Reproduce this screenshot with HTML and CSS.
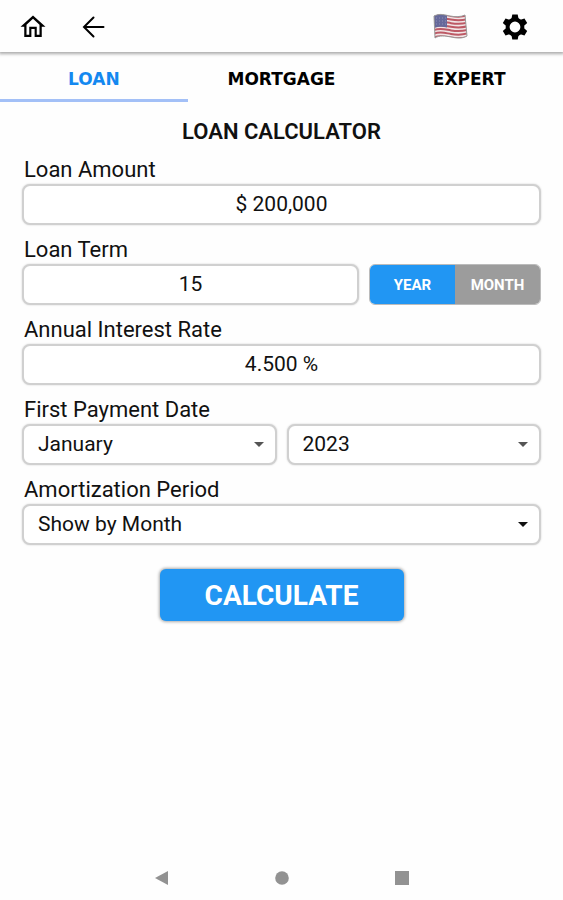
FILE: index.html
```html
<!DOCTYPE html>
<html lang="en">
<head>
    <meta charset="UTF-8">
    <meta name="viewport" content="width=device-width, initial-scale=1">
    <title>Loan Calculator</title>
    <link rel="stylesheet" href="styles.css">
</head>
<body>
<header class="app-bar">
    <button type="button" class="icon-btn" aria-label="Home">
        <svg width="30" height="30" viewBox="0 0 24 24">
            <path d="M12 5.4l5.2 4.8v8H15v-6.4H9v6.4H6.800v-8L12 5.400M12 2.700L2 11.800h3V20h5.700v-6.500h2.600V20H19v-8.200h3L12 2.700z"/>
        </svg>
    </button>
    <button type="button" class="icon-btn" aria-label="Back">
        <svg width="28" height="28" viewBox="0 0 28 28">
            <path class="line" d="M23.500 14H4.500M13.500 4.500L4 14l9.500 9.500"/>
        </svg>
    </button>
    <span class="spacer"></span>
    <button type="button" class="icon-btn" aria-label="Country">
        <svg width="36" height="28" viewBox="0 0 36 28">
            <defs>
                <clipPath id="wave">
                    <path d="M1 3C7 0 12 2 17 3s11 1 15-1l2 21c-5 3-11 2-16 1S6 22 2 25z"/>
                </clipPath>
            </defs>
            <g clip-path="url(#wave)">
                <rect width="36" height="28" fill="#f1e6e7"/>
                <g class="stripes">
                    <path d="M0 3c7-3 12-1 18 0s12 1 18-1"/>
                    <path d="M0 6.600c7-3 12-1 18 0s12 1 18-1"/>
                    <path d="M0 10.200c7-3 12-1 18 0s12 1 18-1"/>
                    <path d="M0 13.800c7-3 12-1 18 0s12 1 18-1"/>
                    <path d="M0 17.400c7-3 12-1 18 0s12 1 18-1"/>
                    <path d="M0 21c7-3 12-1 18 0s12 1 18-1"/>
                    <path d="M0 24.600c7-3 12-1 18 0s12 1 18-1"/>
                </g>
                <path d="M0 0h14v14.500c-5-1-9-1-14 1z" fill="#66699b"/>
                <path class="stars" d="M3 5h11M3 8h11M3 11h11"/>
            </g>
            <path class="flag-edge" d="M1 3C7 0 12 2 17 3s11 1 15-1l2 21c-5 3-11 2-16 1S6 22 2 25z"/>
        </svg>
    </button>
    <button type="button" class="icon-btn" aria-label="Settings">
        <svg width="28" height="28" viewBox="0 0 28 28">
            <circle class="gear" cx="14" cy="14" r="7.400"/>
            <g>
                <path d="M11.300 1.500h5.400l1 5h-7.400zM11.300 26.500h5.400l1-5h-7.400z"/>
                <path transform="rotate(60 14 14)" d="M11.300 1.500h5.400l1 5h-7.400zM11.300 26.500h5.400l1-5h-7.400z"/>
                <path transform="rotate(120 14 14)" d="M11.300 1.500h5.400l1 5h-7.400zM11.300 26.500h5.400l1-5h-7.400z"/>
            </g>
        </svg>
    </button>
</header>

<nav class="tabs">
    <button type="button" class="tab active">LOAN</button>
    <button type="button" class="tab">MORTGAGE</button>
    <button type="button" class="tab">EXPERT</button>
</nav>

<main class="content">
    <h1 class="title">LOAN CALCULATOR</h1>
    <form class="loan-form">
        <div class="field">
            <label for="amount">Loan Amount</label>
            <input type="text" class="box" id="amount" value="$ 200,000">
        </div>
        <div class="field">
            <label for="term">Loan Term</label>
            <div class="row">
                <input type="text" class="box" id="term" value="15">
                <div class="toggle">
                    <button type="button" class="unit on" aria-pressed="true">YEAR</button>
                    <button type="button" class="unit" aria-pressed="false">MONTH</button>
                </div>
            </div>
        </div>
        <div class="field">
            <label for="rate">Annual Interest Rate</label>
            <input type="text" class="box" id="rate" value="4.500 %">
        </div>
        <div class="field">
            <label for="month">First Payment Date</label>
            <div class="row">
                <div class="select">
                    <select class="box" id="month">
                        <option>January</option>
                    </select>
                    <svg class="arrow" width="10" height="5" viewBox="0 0 10 5"><path d="M0 0h10L5 5z"/></svg>
                </div>
                <div class="select">
                    <select class="box" id="year" aria-label="Year">
                        <option>2023</option>
                    </select>
                    <svg class="arrow" width="10" height="5" viewBox="0 0 10 5"><path d="M0 0h10L5 5z"/></svg>
                </div>
            </div>
        </div>
        <div class="field">
            <label for="period">Amortization Period</label>
            <div class="select">
                <select class="box" id="period">
                    <option>Show by Month</option>
                </select>
                <svg class="arrow dark" width="10" height="5" viewBox="0 0 10 5"><path d="M0 0h10L5 5z"/></svg>
            </div>
        </div>
        <button type="button" class="calculate">CALCULATE</button>
    </form>
</main>

<!-- system navigation -->
<footer class="system-bar">
    <button type="button" class="icon-btn" aria-label="System back">
        <svg width="16" height="16" viewBox="0 0 16 16"><path d="M1 8l13-7v14z"/></svg>
    </button>
    <button type="button" class="icon-btn" aria-label="System home">
        <svg width="16" height="16" viewBox="0 0 16 16"><circle cx="8" cy="8" r="6.800"/></svg>
    </button>
    <button type="button" class="icon-btn" aria-label="Recent apps">
        <svg width="16" height="16" viewBox="0 0 16 16"><rect x="1" y="1" width="14" height="14"/></svg>
    </button>
</footer>
</body>
</html>
```
FILE: styles.css
```css
* {
    margin: 0;
    padding: 0;
    box-sizing: border-box;
}

body {
    display: flex;
    flex-direction: column;
    min-height: 100vh;
    background: #fefefe;
    color: #111;
    font-family: Roboto, "Liberation Sans", sans-serif;
}

button, input, select {
    font-family: inherit;
    color: inherit;
    border: none;
    background: none;
}

button {
    cursor: pointer;
}

/* top bar */
.app-bar {
    display: flex;
    align-items: center;
    gap: 32px;
    height: 52px;
    padding: 2px 34px 0 18px;
    box-shadow: 0 1px 3px 1px #aaa;
}

.spacer {
    flex: 1;
}

.icon-btn {
    display: flex;
}

.line {
    fill: none;
    stroke: #000;
    stroke-width: 2;
    stroke-linecap: round;
}

.stripes {
    fill: none;
    stroke: #bd5965;
    stroke-width: 2;
}

.stars {
    stroke: #8f90b5;
    stroke-width: 1;
    stroke-dasharray: 1 2;
}

.flag-edge {
    fill: none;
    stroke: #999;
    stroke-width: 1;
}

.gear {
    fill: none;
    stroke: #000;
    stroke-width: 4;
}

/* tabs */
.tabs {
    display: grid;
    grid-template-columns: repeat(3, 1fr);
    height: 50px;
}

.tab {
    padding-top: 7px;
    border-bottom: 3px solid transparent;
    color: #000;
    font: bold 17px "DejaVu Sans", sans-serif;
}

.tab.active {
    color: #1488f0;
    border-bottom-color: #a3c0f7;
}

/* form */
.content {
    flex: 1;
    padding: 18px 22px 0;
}

.title {
    margin-bottom: 16px;
    font-size: 22px;
    line-height: 24px;
    font-weight: 600;
    text-align: center;
}

.field {
    margin-bottom: 15px;
}

.field label {
    display: block;
    padding-left: 2px;
    font-size: 22px;
    line-height: 20px;
    margin-bottom: 4px;
}

.row {
    display: flex;
    gap: 10px;
}

.box {
    display: block;
    width: 100%;
    height: 41px;
    padding-bottom: 2px;
    border: 2px solid #d0d0d0;
    border-radius: 8px;
    background: #fff;
    box-shadow: 0 0 2px #ccc;
    font-size: 21px;
    text-align: center;
}

.toggle {
    display: flex;
    flex: none;
    width: 172px;
    border: 1px solid #bbb;
    border-radius: 6px;
    overflow: hidden;
}

.unit {
    flex: 1;
    background: #9c9c9c;
    color: #fff;
    font-size: 15px;
    font-weight: bold;
}

.unit.on {
    background: #2196f3;
}

.select {
    display: grid;
    flex: 1;
    align-items: center;
}

.select .box {
    grid-area: 1 / 1;
    padding-left: 14px;
    appearance: none;
    text-align: left;
}

.arrow {
    grid-area: 1 / 1;
    justify-self: end;
    margin-right: 13px;
    fill: #555;
    pointer-events: none;
}

.arrow.dark {
    fill: #111;
}

.calculate {
    display: block;
    width: 244px;
    height: 52px;
    margin: 24px auto 0;
    border-radius: 6px;
    background: #2196f3;
    box-shadow: 0 0 3px 1px #aaa;
    color: #fff;
    font-size: 28px;
    font-weight: bold;
}

.system-bar {
    display: flex;
    justify-content: center;
    gap: 104px;
    padding: 14px 0;
}

.system-bar svg {
    fill: #929292;
}
```
